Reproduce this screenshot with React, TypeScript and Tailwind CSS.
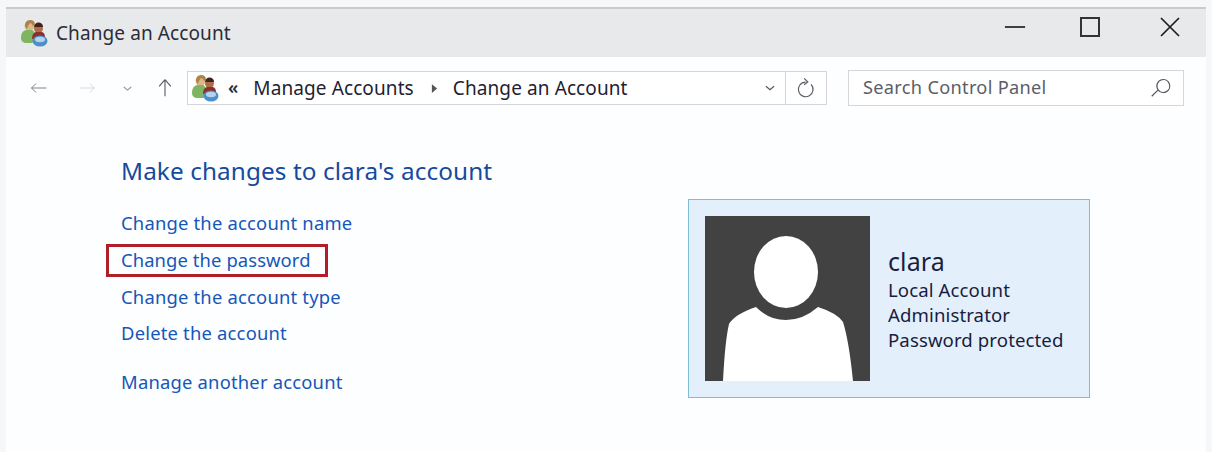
import React from 'react';

function UsersIcon({ className }: { className: string }) {
    return (
        <svg viewBox="0 0 28 28" className={className}>
            <circle cx="9.500" cy="7" r="5" fill="#dcb88a" />
            <path d="M5 7q0-6 5-6t5 5l-2 1q-1-3-3-3-2 2-3 6z" fill="#a98348" />
            <path d="M1 19q0-7 5-8h6q3 1 3 6v5l-3 2H5q-4-1-4-5z" fill="#7fb561" />
            <circle cx="18.500" cy="9.500" r="4.500" fill="#b06c49" />
            <path d="M14 8q1-5 5-4.500t4 4.500q-4 0-9 0z" fill="#40241c" />
            <path d="M12 20q0-6 4-7h6q3 1 3 5v3z" fill="#8c2f2a" />
            <ellipse cx="20" cy="22" rx="7.500" ry="5.500" fill="#4e8fcb" />
            <ellipse cx="20" cy="20.500" rx="5" ry="2.800" fill="#b3d4ef" />
        </svg>
    );
}

function Line({ d, className, width = 1.3 }: { d: string; className: string; width?: number }) {
    return (
        <svg viewBox="0 0 24 24" fill="none" stroke="currentColor" strokeWidth={width} className={className}>
            <path d={d} />
        </svg>
    );
}

const links = ['Change the account name', 'Change the password', 'Change the account type', 'Delete the account'];

export default function App() {
    return (
        <div className="w-[1212px] h-[452px] overflow-hidden bg-[#f6f7f8] pt-[7px] pl-[6px] pr-[6px] font-['Noto_Sans',sans-serif]">
            <div className="h-[445px] bg-[#fdfeff] border-t-2 border-[#c9cbcd]">
                {/* title bar */}
                <div className="h-[48px] bg-[#e8e9eb] flex items-center pl-[14px]">
                    <UsersIcon className="w-[28px] h-[28px] mt-[-1px]" />
                    <span className="ml-[8px] text-[19px] tracking-[0.1px] text-[#2a2d3a]">Change an Account</span>
                    <div className="ml-auto flex items-center text-[#1c1c1c] mt-[-12px]">
                        <Line d="M1 12h22" className="w-[22px] h-[22px]" width={1.8} />
                        <div className="ml-[54px] w-[20px] h-[20px] border-2 border-[#333]"></div>
                        <Line d="M3 3l18 18M21 3L3 21" className="ml-[58px] mr-[24px] w-[24px] h-[24px]" width={1.7} />
                    </div>
                </div>

                {/* nav row */}
                <div className="flex items-center pl-[24px] pt-[13px]">
                    <Line d="M2 12h20M2 12l6-6M2 12l6 6" className="w-[18px] h-[18px] text-[#7c7f86]" />
                    <Line d="M2 12h20M22 12l-6-6M22 12l-6 6" className="ml-[30px] w-[18px] h-[18px] text-[#d7d9dc]" />
                    <Line d="M5 9l7 6 7-6" className="ml-[25px] w-[13px] h-[13px] text-[#8a8d93]" width={2} />
                    <Line d="M12 22V2M12 2L5 10M12 2l7 8" className="ml-[21px] w-[20px] h-[20px] text-[#54575e]" />
                    <div className="ml-[12px] w-[640px] h-[34px] flex items-center border border-[#d5d6d9] bg-white">
                        <UsersIcon className="ml-[3px] w-[28px] h-[28px]" />
                        <span className="ml-[9px] text-[18px] leading-none font-semibold text-[#2a2d3a] mt-[-3px]">«</span>
                        <span className="ml-[15px] text-[19px] text-[#1f2233] tracking-[0.1px]">Manage Accounts</span>
                        <svg viewBox="0 0 8 10" className="ml-[17px] w-[7px] h-[9px]"><path d="M1 0l6 5-6 5z" fill="#555" /></svg>
                        <span className="ml-[15px] text-[19px] text-[#1f2233] tracking-[0.1px]">Change an Account</span>
                        <Line d="M5 9l7 6 7-6" className="ml-auto mr-[8px] w-[14px] h-[14px] text-[#555]" width={2} />
                        <div className="w-[41px] h-full border-l border-[#d5d6d9] flex items-center justify-center">
                            <Line d="M11.500 5.500a8 8 0 1 0 6 2.500M10 1.500l4 4-4 3" className="w-[22px] h-[22px] text-[#5c5f66]" />
                        </div>
                    </div>
                    <div className="ml-[21px] w-[336px] h-[36px] flex items-center border border-[#d5d6d9] bg-white pl-[14px] pr-[12px]">
                        <span className="text-[18.200px] tracking-[0.3px] text-[#5b5e68]">Search Control Panel</span>
                        <Line d="M10 14a7 7 0 1 0 4-11 7 7 0 0 0-4 11zM10 14l-7 7" className="ml-auto w-[22px] h-[22px] text-[#54575e]" />
                    </div>
                </div>

                {/* content */}
                <div className="flex pl-[115px] pt-[48px]">
                    <div className="w-[567px]">
                        <h1 className="text-[24.300px] leading-[34px] tracking-[0.1px] text-[#174a9c] font-normal">Make changes to clara's account</h1>
                        <div className="mt-[21px] flex flex-col items-start gap-[9.750px] text-[18.400px] leading-[27px] text-[#1656b8] tracking-[0.2px]">
                            {links.map((link) => (
                                <a key={link} className={link === 'Change the password' ? 'relative tracking-[0.1px]' : ''}>
                                    {link}
                                    {link === 'Change the password' && (
                                        <span className="absolute left-[-15px] right-[-17px] top-[-2px] bottom-[-4px] border-[3px] border-[#b01e2a]"></span>
                                    )}
                                </a>
                            ))}
                            <a className="mt-[12px]">Manage another account</a>
                        </div>
                    </div>
                    <div className="mt-[45px] w-[402px] h-[199px] bg-[#e3f0fb] border border-[#7fbdd0] flex items-center pl-[16px]">
                        <div className="w-[165px] h-[165px] bg-[#424242] overflow-hidden shrink-0">
                            <svg viewBox="0 0 165 165" className="w-full h-full">
                                <ellipse cx="81" cy="56" rx="32" ry="36" fill="#fff" />
                                <path d="M18 165Q20 125 24 108Q30 98 51 91Q64 104 81 104Q98 104 113 91Q132 97 138 106Q144 125 148 165z" fill="#fff" />
                            </svg>
                        </div>
                        <div className="ml-[18px] text-[#1a1c40] text-[18.600px] leading-[25px] tracking-[0.1px]">
                            <div className="text-[25px] leading-[33px] mb-[-1px]">clara</div>
                            <div>Local Account</div>
                            <div>Administrator</div>
                            <div>Password protected</div>
                        </div>
                    </div>
                </div>
            </div>
        </div>
    );
}
